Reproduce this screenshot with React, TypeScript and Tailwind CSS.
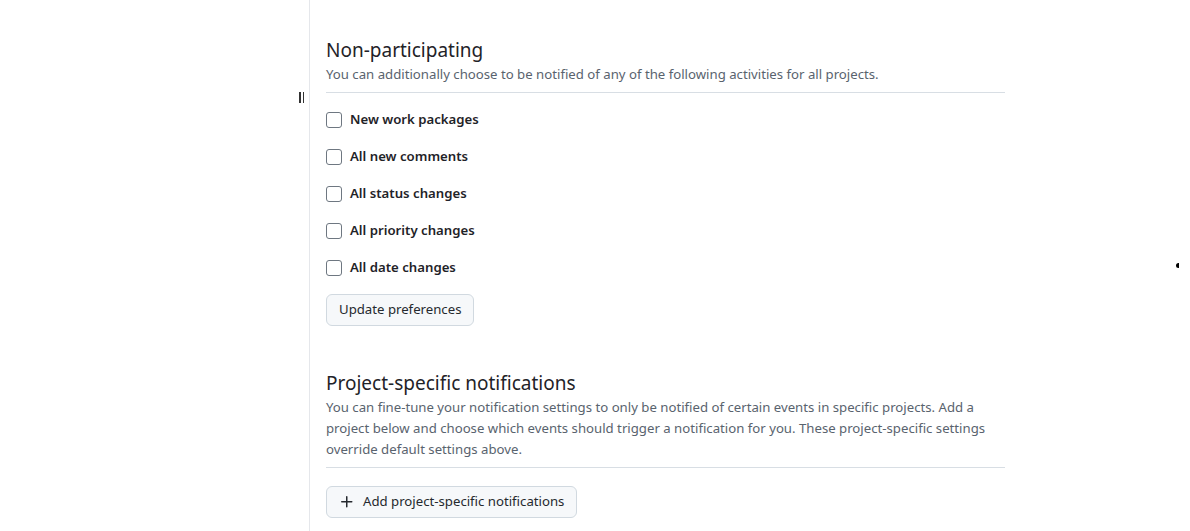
import React from "react";

const items = [
  "New work packages",
  "All new comments",
  "All status changes",
  "All priority changes",
  "All date changes",
];

export default function App() {
  return (
    <div
      className="relative flex h-[531px] w-[1190px] overflow-hidden bg-white text-[#1f2328]"
      style={{ fontFamily: '"Noto Sans", "Open Sans", sans-serif' }}
    >
      <div className="relative w-[310px] shrink-0 border-r border-[#e5e7eb]">
        <div className="absolute left-[299px] top-[92px] flex gap-[2px]">
          <div className="h-[11px] w-[1.5px] bg-[#333]" />
          <div className="h-[11px] w-[1.5px] bg-[#333]" />
        </div>
      </div>
      <div className="w-[695px] pl-[16px] pt-[37px]">
        <h2 className="text-[19px] leading-[26px] font-normal">Non-participating</h2>
        <p className="mt-[1px] text-[13.2px] leading-[20px] text-[#59636e]">
          You can additionally choose to be notified of any of the following activities for all projects.
        </p>
        <div className="mt-[8px] border-t border-[#d8dee4]" />
        <div className="mt-[17px] flex flex-col gap-[17px]">
          {items.map((t) => (
            <label key={t} className="flex h-[20px] items-center gap-[8px]">
              <span className="h-[16px] w-[16px] rounded-[3px] border border-[#6e7781] bg-white" />
              <span className="text-[13.2px] font-semibold">{t}</span>
            </label>
          ))}
        </div>
        <button className="mt-[16px] h-[32px] rounded-[6px] border border-[#d1d9e0] bg-[#f6f8fa] px-[12px] text-[13.2px] text-[#25292e]">
          Update preferences
        </button>
        <h2 className="mt-[44px] text-[19px] leading-[26px] font-normal">Project-specific notifications</h2>
        <p className="mt-[1px] text-[13.2px] leading-[21px] text-[#59636e]">
          You can fine-tune your notification settings to only be notified of certain events in specific projects. Add a
          project below and choose which events should trigger a notification for you. These project-specific settings
          override default settings above.
        </p>
        <div className="mt-[7px] border-t border-[#d8dee4]" />
        <button className="mt-[18px] flex h-[32px] items-center gap-[8px] rounded-[6px] border border-[#d1d9e0] bg-[#f6f8fa] px-[12px] text-[13.2px] text-[#25292e]">
          <svg width="16" height="16" viewBox="0 0 16 16" fill="#25292e">
            <path d="M7.75 2a.75.75 0 0 1 .75.75V7h4.25a.75.75 0 0 1 0 1.5H8.5v4.25a.75.75 0 0 1-1.5 0V8.5H2.75a.75.75 0 0 1 0-1.5H7V2.75A.75.75 0 0 1 7.75 2Z" />
          </svg>
          Add project-specific notifications
        </button>
      </div>
      <div className="absolute left-[1176px] top-[263px] h-[5px] w-[3px] rounded-l-full bg-black" />
    </div>
  );
}
